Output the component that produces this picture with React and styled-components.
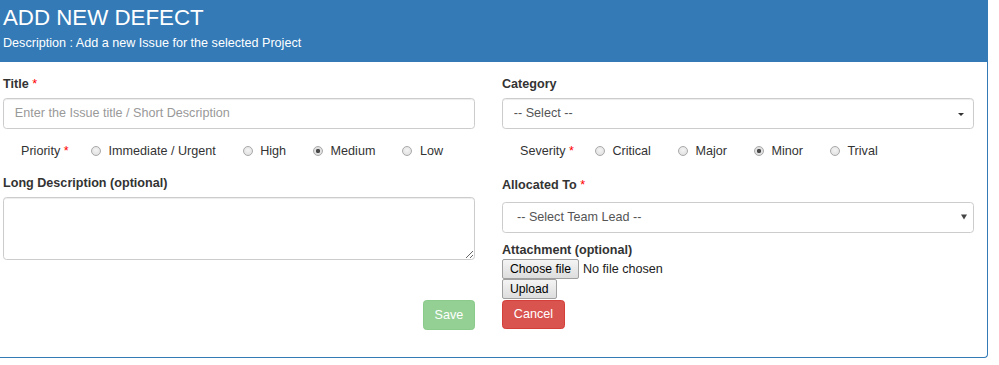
import React from "react";
import styled, { createGlobalStyle, css } from "styled-components";

const GlobalStyle = createGlobalStyle`
  html, body { margin: 0; padding: 0; background: #fff; }
  body {
    font-family: "Liberation Sans", Arial, Helvetica, sans-serif;
    font-size: 12.6px;
    line-height: 18px;
    color: #333;
  }
  * { box-sizing: border-box; }
`;

const Panel = styled.section`
  width: 988px;
  border: 1px solid #337ab7;
  border-left: 0;
  border-top: 0;
  border-radius: 0 0 4px 0;
  background: #fff;
`;

const Heading = styled.header`
  height: 62px;
  background: #337ab7;
  color: #fff;
  padding: 6px 3px 0;
  display: flex;
  flex-direction: column;
`;

const HeadingTitle = styled.h3`
  margin: 0;
  font-size: 22.3px;
  line-height: 24.5px;
  font-weight: 400;
`;

const HeadingSub = styled.h5`
  margin: 3.4px 0 0;
  font-size: 12.6px;
  line-height: 18px;
  font-weight: 400;
`;

const Body = styled.div`
  display: grid;
  grid-template-columns: 472px 472px;
  column-gap: 27px;
  padding: 12.5px 13px 27px 3px;
  align-items: start;
`;

const Column = styled.div`
  display: flex;
  flex-direction: column;
  align-items: stretch;
`;

const FieldLabel = styled.label`
  display: block;
  font-weight: 700;
  font-size: 12.6px;
  line-height: 18px;
  color: #333;
  margin-top: ${(p) => p.$top || 0}px;
  margin-bottom: ${(p) => (p.$bottom ?? 5.5)}px;
`;

const Req = styled.span`
  color: #f00;
  font-weight: 400;
`;

const controlBase = css`
  width: 100%;
  border: 1px solid #ccc;
  border-radius: 3.6px;
  background: #fff;
  box-shadow: inset 0 1px 1px rgba(0, 0, 0, 0.075);
  font-family: "Liberation Sans", Arial, Helvetica, sans-serif;
  font-size: 12.6px;
  color: #555;
  outline: none;
`;

const TextInput = styled.input`
  ${controlBase};
  height: 30.6px;
  padding: 0 10.8px;
  &::placeholder { color: #999; }
`;

const TextArea = styled.textarea`
  ${controlBase};
  display: block;
  height: 63px;
  padding: 5.4px 10.8px;
  resize: vertical;
  margin: 0;
`;

const SelectWrap = styled.div`
  position: relative;
  height: 30.6px;
`;

const Select = styled.select`
  ${controlBase};
  height: 100%;
  appearance: none;
  -webkit-appearance: none;
  padding: 0 24px 0 ${(p) => p.$indent}px;
  box-shadow: ${(p) => (p.$native ? "none" : "inset 0 1px 1px rgba(0,0,0,.075)")};
  cursor: pointer;
`;

const Caret = styled.span`
  position: absolute;
  right: 10px;
  top: 14.5px;
  width: 0;
  height: 0;
  border-left: 3.6px solid transparent;
  border-right: 3.6px solid transparent;
  border-top: 3.8px solid #333;
  pointer-events: none;
`;

const NativeArrow = styled.svg`
  position: absolute;
  right: 7px;
  top: 12px;
  width: 6px;
  height: 6px;
  pointer-events: none;
`;

const RadioRow = styled.div`
  display: flex;
  align-items: center;
  height: 18px;
  margin-top: 13px;
  padding-left: 18px;
`;

const GroupLabel = styled.span`
  margin-right: ${(p) => p.$gap}px;
  white-space: nowrap;
`;

const OptionList = styled.div`
  display: flex;
  align-items: center;
  gap: 27px;
`;

const Option = styled.label`
  display: flex;
  align-items: center;
  gap: 7.5px;
  white-space: nowrap;
  cursor: pointer;
`;

const Radio = styled.input.attrs({ type: "radio" })`
  appearance: none;
  -webkit-appearance: none;
  margin: 1px 0 0;
  width: 10px;
  height: 10px;
  border-radius: 50%;
  border: 1px solid #a9a9a9;
  background: radial-gradient(circle at 50% 40%, #f4f4f4 0%, #dcdcdc 100%);
  position: relative;
  flex: none;
  &:checked {
    background: radial-gradient(circle, #4a4a4a 0, #4a4a4a 1.9px, #e2e2e2 2.4px, #dcdcdc 100%);
  }
`;

const SaveButton = styled.button`
  align-self: flex-end;
  margin-top: 40.5px;
  height: 30px;
  padding: 0 10.8px;
  border: 1px solid #4cae4c;
  border-radius: 3.6px;
  background: #5cb85c;
  color: #fff;
  font-family: "Liberation Sans", Arial, Helvetica, sans-serif;
  font-size: 12.6px;
  opacity: 0.65;
  cursor: not-allowed;
`;

const CancelButton = styled.button`
  align-self: flex-start;
  margin-top: 1px;
  height: 29px;
  padding: 0 10.8px;
  border: 1px solid #d43f3a;
  border-radius: 3.6px;
  background: #d9534f;
  color: #fff;
  font-family: "Liberation Sans", Arial, Helvetica, sans-serif;
  font-size: 12.6px;
  cursor: pointer;
`;

const FileRow = styled.div`
  display: flex;
  align-items: center;
  gap: 4px;
  height: 20px;
`;

const SystemButton = styled.button`
  align-self: flex-start;
  height: 20px;
  padding: 0 7px;
  border: 1px solid #a0a0a0;
  border-radius: 2px;
  background: linear-gradient(#f4f4f4, #dddddd);
  color: #000;
  font-family: "Liberation Sans", Arial, Helvetica, sans-serif;
  font-size: 12.2px;
  line-height: 18px;
  cursor: pointer;
`;

const FileStatus = styled.span`
  font-size: 12.6px;
  color: #222;
`;

function RadioGroup({ label, name, options, checked, gap }) {
  return (
    <RadioRow>
      <GroupLabel $gap={gap}>
        {label} <Req>*</Req>
      </GroupLabel>
      <OptionList>
        {options.map((o) => (
          <Option key={o}>
            <Radio name={name} defaultChecked={o === checked} />
            {o}
          </Option>
        ))}
      </OptionList>
    </RadioRow>
  );
}

export default function App() {
  return (
    <>
      <GlobalStyle />
      <Panel>
        <Heading>
          <HeadingTitle>ADD NEW DEFECT</HeadingTitle>
          <HeadingSub>Description : Add a new Issue for the selected Project</HeadingSub>
        </Heading>
        <Body>
          <Column>
            <FieldLabel>
              Title <Req>*</Req>
            </FieldLabel>
            <TextInput placeholder="Enter the Issue title / Short Description" />
            <RadioGroup
              label="Priority"
              name="priority"
              gap={22.5}
              options={["Immediate / Urgent", "High", "Medium", "Low"]}
              checked="Medium"
            />
            <FieldLabel $top={14} $bottom={5}>
              Long Description (optional)
            </FieldLabel>
            <TextArea />
            <SaveButton disabled>Save</SaveButton>
          </Column>
          <Column>
            <FieldLabel>Category</FieldLabel>
            <SelectWrap>
              <Select $indent={10.8} defaultValue="">
                <option value="">-- Select --</option>
              </Select>
              <Caret />
            </SelectWrap>
            <RadioGroup
              label="Severity"
              name="severity"
              gap={21}
              options={["Critical", "Major", "Minor", "Trival"]}
              checked="Minor"
            />
            <FieldLabel $top={16} $bottom={8.6}>
              Allocated To <Req>*</Req>
            </FieldLabel>
            <SelectWrap>
              <Select $indent={14} $native defaultValue="">
                <option value="">-- Select Team Lead --</option>
              </Select>
              <NativeArrow viewBox="0 0 6 6">
                <path d="M0 0.5 L6 0.5 L3 5.5 Z" fill="#444" />
              </NativeArrow>
            </SelectWrap>
            <FieldLabel $top={8.2} $bottom={0}>
              Attachment (optional)
            </FieldLabel>
            <FileRow>
              <SystemButton type="button">Choose file</SystemButton>
              <FileStatus>No file chosen</FileStatus>
            </FileRow>
            <SystemButton type="button">Upload</SystemButton>
            <CancelButton type="button">Cancel</CancelButton>
          </Column>
        </Body>
      </Panel>
    </>
  );
}
